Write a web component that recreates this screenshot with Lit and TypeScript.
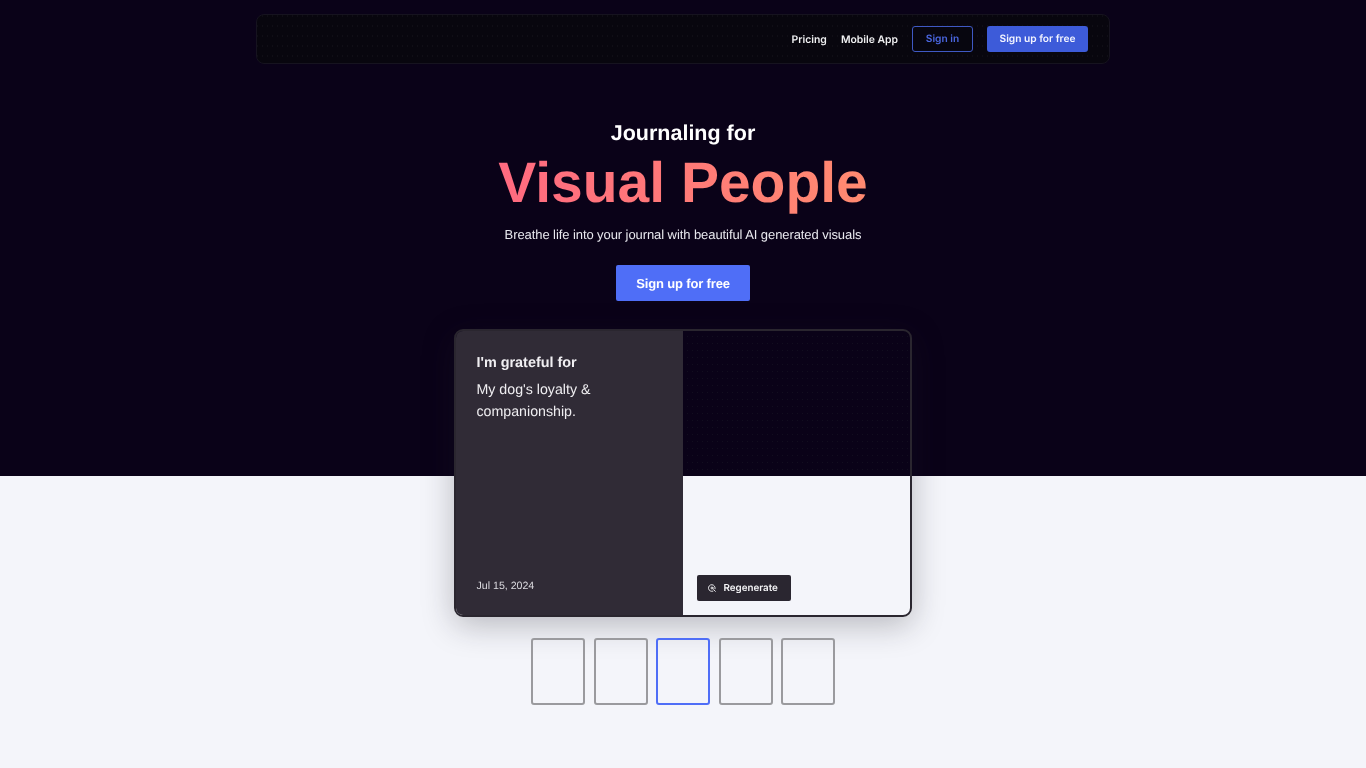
import { LitElement, html, css } from "lit";
import { customElement } from "lit/decorators.js";

@customElement("app-root")
export class AppRoot extends LitElement {
  static styles = css`
    :host {
      display: block;
      height: 768px;
      overflow: hidden;
      font-family: "Liberation Sans", Arial, sans-serif;
      text-rendering: geometricPrecision;
      background: linear-gradient(#0a0218 0, #0a0218 476px, #f4f5fa 476px, #f4f5fa 100%);
      color: #fff;
    }
    .page { display: flex; flex-direction: column; align-items: center; padding-top: 14px; will-change: transform; }
    .nav {
      box-sizing: border-box;
      width: 854px;
      height: 50px;
      border: 1px solid #16131f;
      border-radius: 8px;
      background-color: #08060e;
      background-image: radial-gradient(circle, #100e16 0.6px, transparent 0.8px);
      background-size: 5px 10px;
      background-position: 8px 6px;
      display: flex;
      align-items: center;
      justify-content: flex-end;
      padding-right: 21px;
      font-family: Inter, sans-serif;
      font-size: 10.4px;
      font-weight: 600;
    }
    .link { color: #f0f0f2; margin-right: 14px; white-space: nowrap; }
    .btn {
      box-sizing: border-box;
      height: 26px;
      border-radius: 3px;
      display: flex;
      align-items: center;
      justify-content: center;
      white-space: nowrap;
      font-size: 10.2px;
    }
    .signin { width: 61px; border: 1px solid #3f59c4; color: #4a66e0; margin-right: 14px; background: #07060f; }
    .signup { width: 101px; background: #3d5bd9; color: #f2f4ff; }
    .kicker { margin-top: 57px; font-size: 21.5px; font-weight: 700; line-height: 25px; }
    .title {
      margin-top: 2px;
      font-size: 57px;
      line-height: 70px;
      font-weight: 700;
      background: linear-gradient(90deg, #ff6a80, #ff8a70);
      -webkit-background-clip: text;
      background-clip: text;
      color: transparent;
    }
    .lead { margin-top: 6px; font-size: 13px; letter-spacing: -0.08px; line-height: 21px; color: #e8e8ee; }
    .cta {
      margin-top: 20px;
      width: 134px;
      height: 36px;
      border-radius: 2px;
      background: #4f6ef7;
      color: #fff;
      font-size: 13px;
      letter-spacing: -0.15px;
      font-weight: 700;
      display: flex;
      align-items: center;
      justify-content: center;
    }
    .card {
      box-sizing: border-box;
      margin-top: 28px;
      width: 458px;
      height: 288px;
      border: 2px solid #2a262f;
      border-radius: 9px;
      display: flex;
      overflow: hidden;
      box-shadow: 0 8px 32px rgba(30, 30, 40, 0.28);
    }
    .left {
      flex: 0 0 227px;
      box-sizing: border-box;
      background: #302b36;
      padding: 23px 20.5px 22px 20.5px;
      display: flex;
      flex-direction: column;
    }
    .prompt { font-size: 14.4px; font-weight: 700; line-height: 18px; color: #f0eff2; }
    .answer { margin-top: 8px; font-size: 14.2px; line-height: 21.5px; color: #efeef1; }
    .date { margin-top: auto; font-size: 10.6px; line-height: 14px; color: #dcdbe0; }
    .right {
      flex: 1;
      display: flex;
      flex-direction: column;
      padding: 0 0 14px 14px;
    }
    .dots {
      height: 145px;
      margin-left: -14px;
      background-image: radial-gradient(circle, #120e1f 0.6px, transparent 0.8px);
      background-size: 5px 7px;
      background-position: 2px 2px;
    }
    .regen {
      margin-top: auto;
      width: 94px;
      height: 26px;
      border-radius: 2px;
      background: #2a2630;
      color: #f4f4f6;
      font-family: Inter, sans-serif;
      font-size: 9.8px;
      font-weight: 600;
      display: flex;
      align-items: center;
      gap: 8px;
      padding-left: 10.5px;
      box-sizing: border-box;
    }
    .regen svg { width: 8px; height: 8px; display: block; }
    .thumbs { margin-top: 21px; display: flex; gap: 8.5px; }
    .thumb {
      box-sizing: border-box;
      width: 54px;
      height: 67px;
      border: 2px solid #9a9a9e;
      border-radius: 3px;
    }
    .thumb.on { border-color: #4f6ef7; }
  `;

  render() {
    return html`
      <div class="page">
        <nav class="nav">
          <span class="link">Pricing</span>
          <span class="link">Mobile App</span>
          <span class="btn signin">Sign in</span>
          <span class="btn signup">Sign up for free</span>
        </nav>
        <div class="kicker">Journaling for</div>
        <div class="title">Visual People</div>
        <div class="lead">Breathe life into your journal with beautiful AI generated visuals</div>
        <div class="cta">Sign up for free</div>
        <div class="card">
          <div class="left">
            <div class="prompt">I'm grateful for</div>
            <div class="answer">My dog's loyalty &amp; companionship.</div>
            <div class="date">Jul 15, 2024</div>
          </div>
          <div class="right">
            <div class="dots"></div>
            <div class="regen">
              <svg viewBox="0 0 12 12" fill="none" stroke="#f4f4f6" stroke-width="1.4" stroke-linecap="round">
                <path d="M10.6 7.2A5 5 0 1 0 7.4 10.8" />
                <circle cx="6" cy="6" r="1.5" />
                <path d="M8.4 8.4l2.6 2.6" />
              </svg>
              Regenerate
            </div>
          </div>
        </div>
        <div class="thumbs">
          <div class="thumb"></div>
          <div class="thumb"></div>
          <div class="thumb on"></div>
          <div class="thumb"></div>
          <div class="thumb"></div>
        </div>
      </div>
    `;
  }
}
